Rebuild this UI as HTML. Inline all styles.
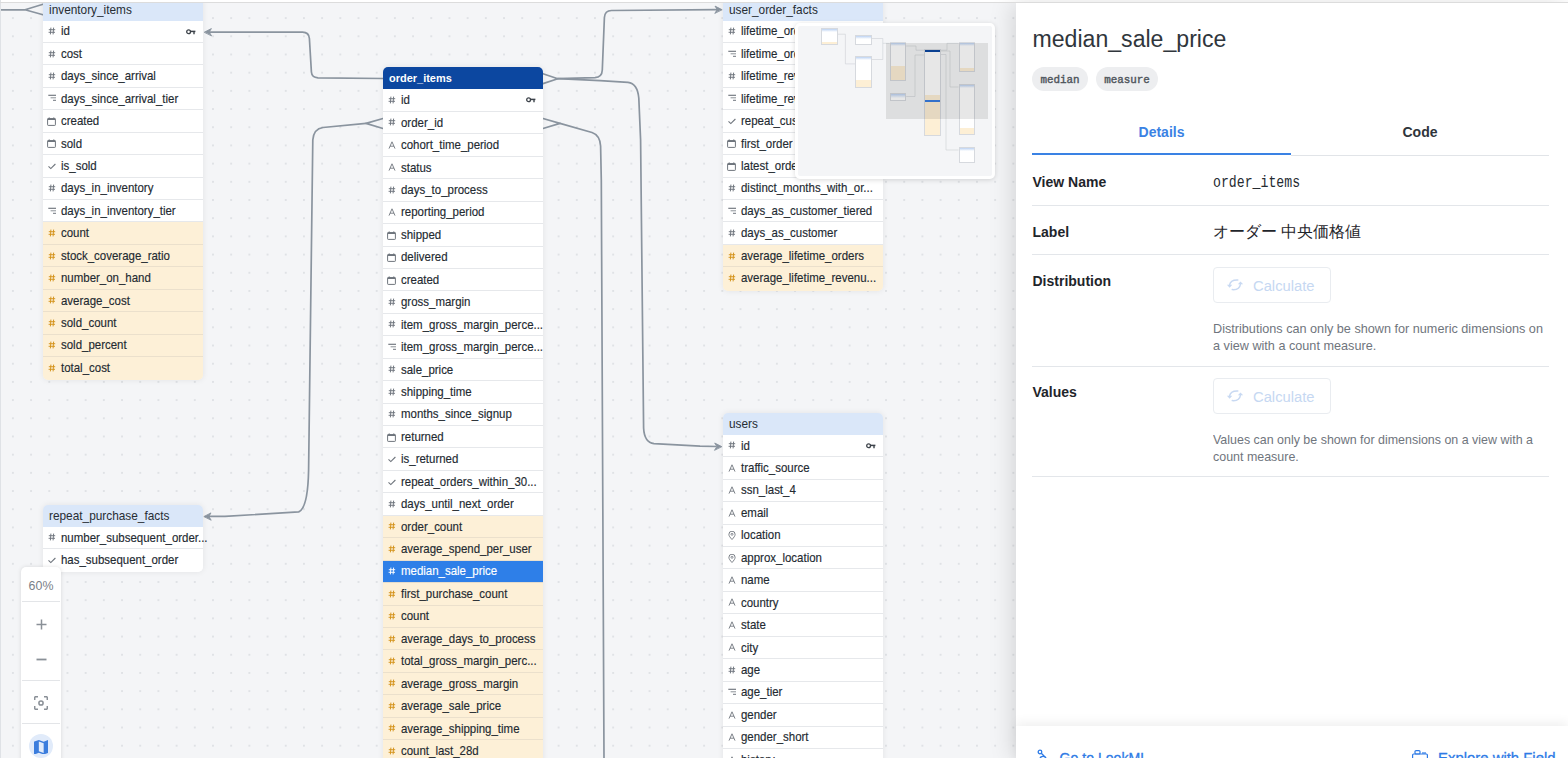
<!DOCTYPE html>
<html><head><meta charset="utf-8">
<style>
html,body{margin:0;padding:0;}
body{width:1568px;height:758px;overflow:hidden;position:relative;background:#fff;font-family:"Liberation Sans",sans-serif;}
#topline{position:absolute;left:0;top:2px;width:1568px;height:1px;background:#dcdcdc;z-index:50;}
#canvas{position:absolute;left:0;top:3px;width:1016px;height:755px;overflow:hidden;background-color:#f4f5f7;
 }
#canvas-inner{position:absolute;left:0;top:-3px;width:1016px;height:758px;}
#leftline{position:absolute;left:0;top:0;width:1px;height:758px;background:#dfe2e6;z-index:5}
.edges{position:absolute;left:0;top:0;}
.tbl{position:absolute;background:transparent;border-radius:5px;box-shadow:0 0 6px rgba(0,0,0,0.08);}
.hdr{position:absolute;left:0;top:0;right:0;background:#dae7f9;color:#272d34;font-size:12.4px;border-radius:5px 5px 0 0;}
.hdr span{position:absolute;left:5.8px;top:4.4px;line-height:14px;white-space:nowrap;transform:scaleX(0.955);transform-origin:0 50%;}
.hdr.sel{background:#0c47a0;color:#fff;font-weight:bold;}
.hdr.sel span{font-size:11.8px;transform:scaleX(0.93);top:3.5px;}
.row{position:absolute;left:0;right:0;box-sizing:border-box;border-bottom:1px solid #e6e8eb;font-size:12.4px;color:#232a31;background:#fff;-webkit-text-stroke:0.15px currentColor;}
.row.last{border-radius:0 0 5px 5px;border-bottom:none !important;}
.row.meas{background:#fdf0d7;border-bottom-color:#ebe0cc;}
.row.selrow{background:#2e7fe8;color:#fff;border-bottom-color:#e4dccd;}
.row span{position:absolute;left:17.6px;top:3.8px;line-height:14px;white-space:nowrap;transform:scaleX(0.925);transform-origin:0 50%;}
.ic{position:absolute;left:4.4px;top:6.6px;width:9px;height:9px;display:block;}
.ic svg{display:block;}
.key{position:absolute;right:7.5px;top:8.0px;display:block;}
.key svg{display:block}
#minimap{position:absolute;left:795px;top:23px;width:200px;height:155.6px;box-sizing:border-box;border:3px solid #fff;border-radius:5px;background:#f4f5f7;box-shadow:0 1px 5px rgba(0,0,0,0.15);overflow:hidden;z-index:20}
#zoomctl{position:absolute;left:21px;top:567px;width:40px;height:200px;background:#fff;border-radius:5px;box-shadow:0 0 4px rgba(0,0,0,0.12);z-index:20}
#panel{position:absolute;left:1016px;top:3px;width:552px;height:755px;background:#fff;box-shadow:-4px 0 22px rgba(0,0,0,0.13);z-index:30;}

#mm-inner{position:absolute;left:0;top:0;right:0;bottom:0;overflow:hidden;}
.mmt{position:absolute;background:#fff;box-sizing:border-box;border:0.6px solid #d6d9de;overflow:hidden;}
#mm-view{position:absolute;left:87.60000000000002px;top:16.9px;width:102.6px;height:75.9px;background:rgba(0,0,0,0.095);}
.zc-pct{position:absolute;left:0;width:40px;top:12px;text-align:center;font-size:12.4px;line-height:14px;color:#7a8088;}
.zc-div{position:absolute;left:1px;width:38px;height:1px;background:#e3e5e8;}
.p-title{position:absolute;left:16.5px;top:22px;font-size:23.1px;line-height:28px;color:#30363c;white-space:nowrap;}
.pill{position:absolute;top:64px;height:24px;box-sizing:border-box;padding-top:1.4px;border-radius:12px;background:#edeef0;font-family:"Liberation Mono",monospace;font-size:10.9px;line-height:24px;text-align:center;color:#4f555c;-webkit-text-stroke:0.4px #4f555c;}
.tab{position:absolute;top:119px;height:20px;text-align:center;font-size:14px;font-weight:bold;line-height:20px;}
.lbl{position:absolute;left:16.5px;font-size:14px;font-weight:bold;line-height:18px;color:#1f252b;white-space:nowrap;}
.mono{position:absolute;left:197px;font-family:"Liberation Mono",monospace;font-size:16.4px;line-height:20px;color:#262b31;transform:scaleX(0.805);transform-origin:0 0;white-space:nowrap;}
.jp{position:absolute;left:197px;font-size:15.5px;line-height:20px;color:#1f252b;white-space:nowrap;}
.sep{position:absolute;left:16px;width:517px;height:1px;background:#e3e6ea;}
.btn{position:absolute;left:197px;width:117.5px;height:35.4px;box-sizing:border-box;border:1px solid #e9ecf0;border-radius:4px;}
.btn span{position:absolute;left:39px;top:9px;font-size:14.75px;line-height:18px;color:#c6d8f2;white-space:nowrap;}
.desc{position:absolute;left:197px;font-size:12.66px;line-height:17.2px;color:#6f757d;white-space:nowrap;}
#footer{position:absolute;left:0;top:723px;width:552px;height:40px;background:#fff;box-shadow:0 -4px 10px rgba(0,0,0,0.06);}
.flink{position:absolute;top:22.5px;font-size:14.3px;line-height:18px;color:#2e7be6;white-space:nowrap;-webkit-text-stroke:0.3px #2e7be6;}
</style></head><body>
<div id="topline"></div>
<div id="canvas"><svg style="position:absolute;left:0;top:0" width="1016" height="755"><defs><pattern id="dots" x="12.9" y="15.1" width="18.19" height="18.19" patternUnits="userSpaceOnUse"><circle cx="0" cy="0" r="0.85" fill="#d5d8dd"/><circle cx="18.19" cy="0" r="0.85" fill="#d5d8dd"/><circle cx="0" cy="18.19" r="0.85" fill="#d5d8dd"/><circle cx="18.19" cy="18.19" r="0.85" fill="#d5d8dd"/></pattern></defs><rect width="1016" height="755" fill="url(#dots)"/></svg><div id="canvas-inner">

<svg class="edges" width="1016" height="758" viewBox="0 0 1016 758">
<g fill="none" stroke="#8a949f" stroke-width="1.7" stroke-linecap="round" stroke-linejoin="round">
<path d="M0 9.8 L25 9.8 M43 4.3 L25 9.8 L43 14.8"/>
<path d="M383 78.5 L318 77.8 Q311.8 77.5 311.4 72 L309.4 38.5 Q309 32.2 302.5 32.1 L208 32.1"/>
<path d="M204.6 32.1 L211.4 28.6 L209.2 32.1 L211.4 35.6 Z" fill="#8a949f" stroke="#8a949f" stroke-width="0.9" stroke-linejoin="miter"/>
<path d="M543 73.7 L557.8 78.7 L543 83.6"/>
<path d="M557.8 78.7 L595 77.6 Q602 77.2 602.3 70 L604.4 17.5 Q604.8 10.6 611.5 10.5 L717 9.6"/>
<path d="M721.8 9.6 L715.0 6.1 L717.1999999999999 9.6 L715.0 13.1 Z" fill="#8a949f" stroke="#8a949f" stroke-width="0.9" stroke-linejoin="miter"/>
<path d="M557.8 78.7 L600 80.6 L628 82.3 Q637.5 83.5 638.8 98 L640.6 140 L643.6 428 Q644.3 442.5 654 443.6 L700 446.2 L716 446.5"/>
<path d="M721.5 446.5 L714.7 443.0 L716.9 446.5 L714.7 450.0 Z" fill="#8a949f" stroke="#8a949f" stroke-width="0.9" stroke-linejoin="miter"/>
<path d="M543 118.5 L560 123.4 L543 128.5"/>
<path d="M560 123.4 L592 132.5 Q600 135.3 600.6 146 L601.3 180 L604 758"/>
<path d="M383 118.5 L366 123.4 L383 128.5"/>
<path d="M366 123.4 L323 127.5 Q313.6 128.8 312.8 140 L308.6 470 Q307.9 508 298.7 511.9 L225 516.4 L208 516.4"/>
<path d="M204.2 516.4 L211.0 512.9 L208.79999999999998 516.4 L211.0 519.9 Z" fill="#8a949f" stroke="#8a949f" stroke-width="0.9" stroke-linejoin="miter"/>
</g>
</svg>

<div class="tbl" style="left:43.2px;top:-1.6px;width:160px;height:381.94px">
<div class="hdr" style="height:22.1px"><span>inventory_items</span></div>
<div class="row" style="top:22.10px;height:22.44px"><i class="ic ic-num"><svg width="8" height="8" viewBox="0 0 8 8"><path d="M2.9 0.6 L2.4 7.4 M5.6 0.6 L5.1 7.4 M0.8 2.7 H7.2 M0.6 5.3 H7.0" stroke="#6f757d" stroke-width="0.95" fill="none"/></svg></i><span>id</span><i class="key"><svg width="10" height="6" viewBox="0 0 10 6"><circle cx="2.6" cy="2.8" r="1.9" stroke="#3d434a" stroke-width="1.3" fill="none"/><path d="M4.4 2.4 H9.4" stroke="#3d434a" stroke-width="1.5"/><path d="M8 2.4 V5.2" stroke="#3d434a" stroke-width="1.4"/></svg></i></div>
<div class="row" style="top:44.54px;height:22.44px"><i class="ic ic-num"><svg width="8" height="8" viewBox="0 0 8 8"><path d="M2.9 0.6 L2.4 7.4 M5.6 0.6 L5.1 7.4 M0.8 2.7 H7.2 M0.6 5.3 H7.0" stroke="#6f757d" stroke-width="0.95" fill="none"/></svg></i><span>cost</span></div>
<div class="row" style="top:66.98px;height:22.44px"><i class="ic ic-num"><svg width="8" height="8" viewBox="0 0 8 8"><path d="M2.9 0.6 L2.4 7.4 M5.6 0.6 L5.1 7.4 M0.8 2.7 H7.2 M0.6 5.3 H7.0" stroke="#6f757d" stroke-width="0.95" fill="none"/></svg></i><span>days_since_arrival</span></div>
<div class="row" style="top:89.42px;height:22.44px"><i class="ic ic-tier"><svg width="9" height="8" viewBox="0 0 9 8"><path d="M0.3 1.3 H8.0" stroke="#6f757d" stroke-width="1.15" fill="none"/><path d="M2.6 3.8 H8.0" stroke="#6f757d" stroke-width="1" fill="none" opacity="0.8"/><path d="M5.0 6.3 H8.0" stroke="#6f757d" stroke-width="1" fill="none"/></svg></i><span>days_since_arrival_tier</span></div>
<div class="row" style="top:111.86px;height:22.44px"><i class="ic ic-date"><svg width="9" height="9" viewBox="0 0 9 9" style="margin-left:-0.7px;margin-top:0.2px"><rect x="0.6" y="1.6" width="7.8" height="6.8" rx="0.6" stroke="#6f757d" stroke-width="1" fill="none"/><path d="M0.6 2.2 H8.4" stroke="#6f757d" stroke-width="1.6"/><path d="M2.2 0.4 V2 M6.8 0.4 V2" stroke="#6f757d" stroke-width="1"/></svg></i><span>created</span></div>
<div class="row" style="top:134.30px;height:22.44px"><i class="ic ic-date"><svg width="9" height="9" viewBox="0 0 9 9" style="margin-left:-0.7px;margin-top:0.2px"><rect x="0.6" y="1.6" width="7.8" height="6.8" rx="0.6" stroke="#6f757d" stroke-width="1" fill="none"/><path d="M0.6 2.2 H8.4" stroke="#6f757d" stroke-width="1.6"/><path d="M2.2 0.4 V2 M6.8 0.4 V2" stroke="#6f757d" stroke-width="1"/></svg></i><span>sold</span></div>
<div class="row" style="top:156.74px;height:22.44px"><i class="ic ic-yes"><svg width="8" height="8" viewBox="0 0 8 8"><path d="M0.5 4.4 L2.8 6.6 L7.4 2.0" stroke="#6f757d" stroke-width="1.1" fill="none"/></svg></i><span>is_sold</span></div>
<div class="row" style="top:179.18px;height:22.44px"><i class="ic ic-num"><svg width="8" height="8" viewBox="0 0 8 8"><path d="M2.9 0.6 L2.4 7.4 M5.6 0.6 L5.1 7.4 M0.8 2.7 H7.2 M0.6 5.3 H7.0" stroke="#6f757d" stroke-width="0.95" fill="none"/></svg></i><span>days_in_inventory</span></div>
<div class="row" style="top:201.62px;height:22.44px"><i class="ic ic-tier"><svg width="9" height="8" viewBox="0 0 9 8"><path d="M0.3 1.3 H8.0" stroke="#6f757d" stroke-width="1.15" fill="none"/><path d="M2.6 3.8 H8.0" stroke="#6f757d" stroke-width="1" fill="none" opacity="0.8"/><path d="M5.0 6.3 H8.0" stroke="#6f757d" stroke-width="1" fill="none"/></svg></i><span>days_in_inventory_tier</span></div>
<div class="row meas" style="top:224.06px;height:22.44px"><i class="ic ic-num"><svg width="8" height="8" viewBox="0 0 8 8"><path d="M2.9 0.6 L2.4 7.4 M5.6 0.6 L5.1 7.4 M0.8 2.7 H7.2 M0.6 5.3 H7.0" stroke="#d4921a" stroke-width="0.95" fill="none"/></svg></i><span>count</span></div>
<div class="row meas" style="top:246.50px;height:22.44px"><i class="ic ic-num"><svg width="8" height="8" viewBox="0 0 8 8"><path d="M2.9 0.6 L2.4 7.4 M5.6 0.6 L5.1 7.4 M0.8 2.7 H7.2 M0.6 5.3 H7.0" stroke="#d4921a" stroke-width="0.95" fill="none"/></svg></i><span>stock_coverage_ratio</span></div>
<div class="row meas" style="top:268.94px;height:22.44px"><i class="ic ic-num"><svg width="8" height="8" viewBox="0 0 8 8"><path d="M2.9 0.6 L2.4 7.4 M5.6 0.6 L5.1 7.4 M0.8 2.7 H7.2 M0.6 5.3 H7.0" stroke="#d4921a" stroke-width="0.95" fill="none"/></svg></i><span>number_on_hand</span></div>
<div class="row meas" style="top:291.38px;height:22.44px"><i class="ic ic-num"><svg width="8" height="8" viewBox="0 0 8 8"><path d="M2.9 0.6 L2.4 7.4 M5.6 0.6 L5.1 7.4 M0.8 2.7 H7.2 M0.6 5.3 H7.0" stroke="#d4921a" stroke-width="0.95" fill="none"/></svg></i><span>average_cost</span></div>
<div class="row meas" style="top:313.82px;height:22.44px"><i class="ic ic-num"><svg width="8" height="8" viewBox="0 0 8 8"><path d="M2.9 0.6 L2.4 7.4 M5.6 0.6 L5.1 7.4 M0.8 2.7 H7.2 M0.6 5.3 H7.0" stroke="#d4921a" stroke-width="0.95" fill="none"/></svg></i><span>sold_count</span></div>
<div class="row meas" style="top:336.26px;height:22.44px"><i class="ic ic-num"><svg width="8" height="8" viewBox="0 0 8 8"><path d="M2.9 0.6 L2.4 7.4 M5.6 0.6 L5.1 7.4 M0.8 2.7 H7.2 M0.6 5.3 H7.0" stroke="#d4921a" stroke-width="0.95" fill="none"/></svg></i><span>sold_percent</span></div>
<div class="row meas last" style="top:358.70px;height:23.24px"><i class="ic ic-num"><svg width="8" height="8" viewBox="0 0 8 8"><path d="M2.9 0.6 L2.4 7.4 M5.6 0.6 L5.1 7.4 M0.8 2.7 H7.2 M0.6 5.3 H7.0" stroke="#d4921a" stroke-width="0.95" fill="none"/></svg></i><span>total_cost</span></div>
</div>
<div class="tbl" style="left:723.2px;top:-1.6px;width:160px;height:292.18px">
<div class="hdr" style="height:22.1px"><span>user_order_facts</span></div>
<div class="row" style="top:22.10px;height:22.44px"><i class="ic ic-num"><svg width="8" height="8" viewBox="0 0 8 8"><path d="M2.9 0.6 L2.4 7.4 M5.6 0.6 L5.1 7.4 M0.8 2.7 H7.2 M0.6 5.3 H7.0" stroke="#6f757d" stroke-width="0.95" fill="none"/></svg></i><span>lifetime_orders</span></div>
<div class="row" style="top:44.54px;height:22.44px"><i class="ic ic-tier"><svg width="9" height="8" viewBox="0 0 9 8"><path d="M0.3 1.3 H8.0" stroke="#6f757d" stroke-width="1.15" fill="none"/><path d="M2.6 3.8 H8.0" stroke="#6f757d" stroke-width="1" fill="none" opacity="0.8"/><path d="M5.0 6.3 H8.0" stroke="#6f757d" stroke-width="1" fill="none"/></svg></i><span>lifetime_orders_tier</span></div>
<div class="row" style="top:66.98px;height:22.44px"><i class="ic ic-num"><svg width="8" height="8" viewBox="0 0 8 8"><path d="M2.9 0.6 L2.4 7.4 M5.6 0.6 L5.1 7.4 M0.8 2.7 H7.2 M0.6 5.3 H7.0" stroke="#6f757d" stroke-width="0.95" fill="none"/></svg></i><span>lifetime_revenue</span></div>
<div class="row" style="top:89.42px;height:22.44px"><i class="ic ic-tier"><svg width="9" height="8" viewBox="0 0 9 8"><path d="M0.3 1.3 H8.0" stroke="#6f757d" stroke-width="1.15" fill="none"/><path d="M2.6 3.8 H8.0" stroke="#6f757d" stroke-width="1" fill="none" opacity="0.8"/><path d="M5.0 6.3 H8.0" stroke="#6f757d" stroke-width="1" fill="none"/></svg></i><span>lifetime_revenue_tier</span></div>
<div class="row" style="top:111.86px;height:22.44px"><i class="ic ic-yes"><svg width="8" height="8" viewBox="0 0 8 8"><path d="M0.5 4.4 L2.8 6.6 L7.4 2.0" stroke="#6f757d" stroke-width="1.1" fill="none"/></svg></i><span>repeat_customer</span></div>
<div class="row" style="top:134.30px;height:22.44px"><i class="ic ic-date"><svg width="9" height="9" viewBox="0 0 9 9" style="margin-left:-0.7px;margin-top:0.2px"><rect x="0.6" y="1.6" width="7.8" height="6.8" rx="0.6" stroke="#6f757d" stroke-width="1" fill="none"/><path d="M0.6 2.2 H8.4" stroke="#6f757d" stroke-width="1.6"/><path d="M2.2 0.4 V2 M6.8 0.4 V2" stroke="#6f757d" stroke-width="1"/></svg></i><span>first_order</span></div>
<div class="row" style="top:156.74px;height:22.44px"><i class="ic ic-date"><svg width="9" height="9" viewBox="0 0 9 9" style="margin-left:-0.7px;margin-top:0.2px"><rect x="0.6" y="1.6" width="7.8" height="6.8" rx="0.6" stroke="#6f757d" stroke-width="1" fill="none"/><path d="M0.6 2.2 H8.4" stroke="#6f757d" stroke-width="1.6"/><path d="M2.2 0.4 V2 M6.8 0.4 V2" stroke="#6f757d" stroke-width="1"/></svg></i><span>latest_order</span></div>
<div class="row" style="top:179.18px;height:22.44px"><i class="ic ic-num"><svg width="8" height="8" viewBox="0 0 8 8"><path d="M2.9 0.6 L2.4 7.4 M5.6 0.6 L5.1 7.4 M0.8 2.7 H7.2 M0.6 5.3 H7.0" stroke="#6f757d" stroke-width="0.95" fill="none"/></svg></i><span>distinct_months_with_or...</span></div>
<div class="row" style="top:201.62px;height:22.44px"><i class="ic ic-tier"><svg width="9" height="8" viewBox="0 0 9 8"><path d="M0.3 1.3 H8.0" stroke="#6f757d" stroke-width="1.15" fill="none"/><path d="M2.6 3.8 H8.0" stroke="#6f757d" stroke-width="1" fill="none" opacity="0.8"/><path d="M5.0 6.3 H8.0" stroke="#6f757d" stroke-width="1" fill="none"/></svg></i><span>days_as_customer_tiered</span></div>
<div class="row" style="top:224.06px;height:22.44px"><i class="ic ic-num"><svg width="8" height="8" viewBox="0 0 8 8"><path d="M2.9 0.6 L2.4 7.4 M5.6 0.6 L5.1 7.4 M0.8 2.7 H7.2 M0.6 5.3 H7.0" stroke="#6f757d" stroke-width="0.95" fill="none"/></svg></i><span>days_as_customer</span></div>
<div class="row meas" style="top:246.50px;height:22.44px"><i class="ic ic-num"><svg width="8" height="8" viewBox="0 0 8 8"><path d="M2.9 0.6 L2.4 7.4 M5.6 0.6 L5.1 7.4 M0.8 2.7 H7.2 M0.6 5.3 H7.0" stroke="#d4921a" stroke-width="0.95" fill="none"/></svg></i><span>average_lifetime_orders</span></div>
<div class="row meas last" style="top:268.94px;height:23.24px"><i class="ic ic-num"><svg width="8" height="8" viewBox="0 0 8 8"><path d="M2.9 0.6 L2.4 7.4 M5.6 0.6 L5.1 7.4 M0.8 2.7 H7.2 M0.6 5.3 H7.0" stroke="#d4921a" stroke-width="0.95" fill="none"/></svg></i><span>average_lifetime_revenu...</span></div>
</div>
<div class="tbl" style="left:383.2px;top:67.35px;width:160px;height:718.54px">
<div class="hdr sel" style="height:22.1px"><span>order_items</span></div>
<div class="row" style="top:22.10px;height:22.44px"><i class="ic ic-num"><svg width="8" height="8" viewBox="0 0 8 8"><path d="M2.9 0.6 L2.4 7.4 M5.6 0.6 L5.1 7.4 M0.8 2.7 H7.2 M0.6 5.3 H7.0" stroke="#6f757d" stroke-width="0.95" fill="none"/></svg></i><span>id</span><i class="key"><svg width="10" height="6" viewBox="0 0 10 6"><circle cx="2.6" cy="2.8" r="1.9" stroke="#3d434a" stroke-width="1.3" fill="none"/><path d="M4.4 2.4 H9.4" stroke="#3d434a" stroke-width="1.5"/><path d="M8 2.4 V5.2" stroke="#3d434a" stroke-width="1.4"/></svg></i></div>
<div class="row" style="top:44.54px;height:22.44px"><i class="ic ic-num"><svg width="8" height="8" viewBox="0 0 8 8"><path d="M2.9 0.6 L2.4 7.4 M5.6 0.6 L5.1 7.4 M0.8 2.7 H7.2 M0.6 5.3 H7.0" stroke="#6f757d" stroke-width="0.95" fill="none"/></svg></i><span>order_id</span></div>
<div class="row" style="top:66.98px;height:22.44px"><i class="ic ic-str"><svg width="8" height="8" viewBox="0 0 8 8"><path d="M1 7.6 L4 0.8 L7 7.6 M2.1 5.2 H5.9" stroke="#6f757d" stroke-width="0.9" fill="none"/></svg></i><span>cohort_time_period</span></div>
<div class="row" style="top:89.42px;height:22.44px"><i class="ic ic-str"><svg width="8" height="8" viewBox="0 0 8 8"><path d="M1 7.6 L4 0.8 L7 7.6 M2.1 5.2 H5.9" stroke="#6f757d" stroke-width="0.9" fill="none"/></svg></i><span>status</span></div>
<div class="row" style="top:111.86px;height:22.44px"><i class="ic ic-num"><svg width="8" height="8" viewBox="0 0 8 8"><path d="M2.9 0.6 L2.4 7.4 M5.6 0.6 L5.1 7.4 M0.8 2.7 H7.2 M0.6 5.3 H7.0" stroke="#6f757d" stroke-width="0.95" fill="none"/></svg></i><span>days_to_process</span></div>
<div class="row" style="top:134.30px;height:22.44px"><i class="ic ic-str"><svg width="8" height="8" viewBox="0 0 8 8"><path d="M1 7.6 L4 0.8 L7 7.6 M2.1 5.2 H5.9" stroke="#6f757d" stroke-width="0.9" fill="none"/></svg></i><span>reporting_period</span></div>
<div class="row" style="top:156.74px;height:22.44px"><i class="ic ic-date"><svg width="9" height="9" viewBox="0 0 9 9" style="margin-left:-0.7px;margin-top:0.2px"><rect x="0.6" y="1.6" width="7.8" height="6.8" rx="0.6" stroke="#6f757d" stroke-width="1" fill="none"/><path d="M0.6 2.2 H8.4" stroke="#6f757d" stroke-width="1.6"/><path d="M2.2 0.4 V2 M6.8 0.4 V2" stroke="#6f757d" stroke-width="1"/></svg></i><span>shipped</span></div>
<div class="row" style="top:179.18px;height:22.44px"><i class="ic ic-date"><svg width="9" height="9" viewBox="0 0 9 9" style="margin-left:-0.7px;margin-top:0.2px"><rect x="0.6" y="1.6" width="7.8" height="6.8" rx="0.6" stroke="#6f757d" stroke-width="1" fill="none"/><path d="M0.6 2.2 H8.4" stroke="#6f757d" stroke-width="1.6"/><path d="M2.2 0.4 V2 M6.8 0.4 V2" stroke="#6f757d" stroke-width="1"/></svg></i><span>delivered</span></div>
<div class="row" style="top:201.62px;height:22.44px"><i class="ic ic-date"><svg width="9" height="9" viewBox="0 0 9 9" style="margin-left:-0.7px;margin-top:0.2px"><rect x="0.6" y="1.6" width="7.8" height="6.8" rx="0.6" stroke="#6f757d" stroke-width="1" fill="none"/><path d="M0.6 2.2 H8.4" stroke="#6f757d" stroke-width="1.6"/><path d="M2.2 0.4 V2 M6.8 0.4 V2" stroke="#6f757d" stroke-width="1"/></svg></i><span>created</span></div>
<div class="row" style="top:224.06px;height:22.44px"><i class="ic ic-num"><svg width="8" height="8" viewBox="0 0 8 8"><path d="M2.9 0.6 L2.4 7.4 M5.6 0.6 L5.1 7.4 M0.8 2.7 H7.2 M0.6 5.3 H7.0" stroke="#6f757d" stroke-width="0.95" fill="none"/></svg></i><span>gross_margin</span></div>
<div class="row" style="top:246.50px;height:22.44px"><i class="ic ic-num"><svg width="8" height="8" viewBox="0 0 8 8"><path d="M2.9 0.6 L2.4 7.4 M5.6 0.6 L5.1 7.4 M0.8 2.7 H7.2 M0.6 5.3 H7.0" stroke="#6f757d" stroke-width="0.95" fill="none"/></svg></i><span>item_gross_margin_perce...</span></div>
<div class="row" style="top:268.94px;height:22.44px"><i class="ic ic-tier"><svg width="9" height="8" viewBox="0 0 9 8"><path d="M0.3 1.3 H8.0" stroke="#6f757d" stroke-width="1.15" fill="none"/><path d="M2.6 3.8 H8.0" stroke="#6f757d" stroke-width="1" fill="none" opacity="0.8"/><path d="M5.0 6.3 H8.0" stroke="#6f757d" stroke-width="1" fill="none"/></svg></i><span>item_gross_margin_perce...</span></div>
<div class="row" style="top:291.38px;height:22.44px"><i class="ic ic-num"><svg width="8" height="8" viewBox="0 0 8 8"><path d="M2.9 0.6 L2.4 7.4 M5.6 0.6 L5.1 7.4 M0.8 2.7 H7.2 M0.6 5.3 H7.0" stroke="#6f757d" stroke-width="0.95" fill="none"/></svg></i><span>sale_price</span></div>
<div class="row" style="top:313.82px;height:22.44px"><i class="ic ic-num"><svg width="8" height="8" viewBox="0 0 8 8"><path d="M2.9 0.6 L2.4 7.4 M5.6 0.6 L5.1 7.4 M0.8 2.7 H7.2 M0.6 5.3 H7.0" stroke="#6f757d" stroke-width="0.95" fill="none"/></svg></i><span>shipping_time</span></div>
<div class="row" style="top:336.26px;height:22.44px"><i class="ic ic-num"><svg width="8" height="8" viewBox="0 0 8 8"><path d="M2.9 0.6 L2.4 7.4 M5.6 0.6 L5.1 7.4 M0.8 2.7 H7.2 M0.6 5.3 H7.0" stroke="#6f757d" stroke-width="0.95" fill="none"/></svg></i><span>months_since_signup</span></div>
<div class="row" style="top:358.70px;height:22.44px"><i class="ic ic-date"><svg width="9" height="9" viewBox="0 0 9 9" style="margin-left:-0.7px;margin-top:0.2px"><rect x="0.6" y="1.6" width="7.8" height="6.8" rx="0.6" stroke="#6f757d" stroke-width="1" fill="none"/><path d="M0.6 2.2 H8.4" stroke="#6f757d" stroke-width="1.6"/><path d="M2.2 0.4 V2 M6.8 0.4 V2" stroke="#6f757d" stroke-width="1"/></svg></i><span>returned</span></div>
<div class="row" style="top:381.14px;height:22.44px"><i class="ic ic-yes"><svg width="8" height="8" viewBox="0 0 8 8"><path d="M0.5 4.4 L2.8 6.6 L7.4 2.0" stroke="#6f757d" stroke-width="1.1" fill="none"/></svg></i><span>is_returned</span></div>
<div class="row" style="top:403.58px;height:22.44px"><i class="ic ic-yes"><svg width="8" height="8" viewBox="0 0 8 8"><path d="M0.5 4.4 L2.8 6.6 L7.4 2.0" stroke="#6f757d" stroke-width="1.1" fill="none"/></svg></i><span>repeat_orders_within_30...</span></div>
<div class="row" style="top:426.02px;height:22.44px"><i class="ic ic-num"><svg width="8" height="8" viewBox="0 0 8 8"><path d="M2.9 0.6 L2.4 7.4 M5.6 0.6 L5.1 7.4 M0.8 2.7 H7.2 M0.6 5.3 H7.0" stroke="#6f757d" stroke-width="0.95" fill="none"/></svg></i><span>days_until_next_order</span></div>
<div class="row meas" style="top:448.46px;height:22.44px"><i class="ic ic-num"><svg width="8" height="8" viewBox="0 0 8 8"><path d="M2.9 0.6 L2.4 7.4 M5.6 0.6 L5.1 7.4 M0.8 2.7 H7.2 M0.6 5.3 H7.0" stroke="#d4921a" stroke-width="0.95" fill="none"/></svg></i><span>order_count</span></div>
<div class="row meas" style="top:470.90px;height:22.44px"><i class="ic ic-num"><svg width="8" height="8" viewBox="0 0 8 8"><path d="M2.9 0.6 L2.4 7.4 M5.6 0.6 L5.1 7.4 M0.8 2.7 H7.2 M0.6 5.3 H7.0" stroke="#d4921a" stroke-width="0.95" fill="none"/></svg></i><span>average_spend_per_user</span></div>
<div class="row selrow" style="top:493.34px;height:22.44px"><i class="ic ic-num"><svg width="8" height="8" viewBox="0 0 8 8"><path d="M2.9 0.6 L2.4 7.4 M5.6 0.6 L5.1 7.4 M0.8 2.7 H7.2 M0.6 5.3 H7.0" stroke="#ffffff" stroke-width="0.95" fill="none"/></svg></i><span>median_sale_price</span></div>
<div class="row meas" style="top:515.78px;height:22.44px"><i class="ic ic-num"><svg width="8" height="8" viewBox="0 0 8 8"><path d="M2.9 0.6 L2.4 7.4 M5.6 0.6 L5.1 7.4 M0.8 2.7 H7.2 M0.6 5.3 H7.0" stroke="#d4921a" stroke-width="0.95" fill="none"/></svg></i><span>first_purchase_count</span></div>
<div class="row meas" style="top:538.22px;height:22.44px"><i class="ic ic-num"><svg width="8" height="8" viewBox="0 0 8 8"><path d="M2.9 0.6 L2.4 7.4 M5.6 0.6 L5.1 7.4 M0.8 2.7 H7.2 M0.6 5.3 H7.0" stroke="#d4921a" stroke-width="0.95" fill="none"/></svg></i><span>count</span></div>
<div class="row meas" style="top:560.66px;height:22.44px"><i class="ic ic-num"><svg width="8" height="8" viewBox="0 0 8 8"><path d="M2.9 0.6 L2.4 7.4 M5.6 0.6 L5.1 7.4 M0.8 2.7 H7.2 M0.6 5.3 H7.0" stroke="#d4921a" stroke-width="0.95" fill="none"/></svg></i><span>average_days_to_process</span></div>
<div class="row meas" style="top:583.10px;height:22.44px"><i class="ic ic-num"><svg width="8" height="8" viewBox="0 0 8 8"><path d="M2.9 0.6 L2.4 7.4 M5.6 0.6 L5.1 7.4 M0.8 2.7 H7.2 M0.6 5.3 H7.0" stroke="#d4921a" stroke-width="0.95" fill="none"/></svg></i><span>total_gross_margin_perc...</span></div>
<div class="row meas" style="top:605.54px;height:22.44px"><i class="ic ic-num"><svg width="8" height="8" viewBox="0 0 8 8"><path d="M2.9 0.6 L2.4 7.4 M5.6 0.6 L5.1 7.4 M0.8 2.7 H7.2 M0.6 5.3 H7.0" stroke="#d4921a" stroke-width="0.95" fill="none"/></svg></i><span>average_gross_margin</span></div>
<div class="row meas" style="top:627.98px;height:22.44px"><i class="ic ic-num"><svg width="8" height="8" viewBox="0 0 8 8"><path d="M2.9 0.6 L2.4 7.4 M5.6 0.6 L5.1 7.4 M0.8 2.7 H7.2 M0.6 5.3 H7.0" stroke="#d4921a" stroke-width="0.95" fill="none"/></svg></i><span>average_sale_price</span></div>
<div class="row meas" style="top:650.42px;height:22.44px"><i class="ic ic-num"><svg width="8" height="8" viewBox="0 0 8 8"><path d="M2.9 0.6 L2.4 7.4 M5.6 0.6 L5.1 7.4 M0.8 2.7 H7.2 M0.6 5.3 H7.0" stroke="#d4921a" stroke-width="0.95" fill="none"/></svg></i><span>average_shipping_time</span></div>
<div class="row meas" style="top:672.86px;height:22.44px"><i class="ic ic-num"><svg width="8" height="8" viewBox="0 0 8 8"><path d="M2.9 0.6 L2.4 7.4 M5.6 0.6 L5.1 7.4 M0.8 2.7 H7.2 M0.6 5.3 H7.0" stroke="#d4921a" stroke-width="0.95" fill="none"/></svg></i><span>count_last_28d</span></div>
<div class="row meas last" style="top:695.30px;height:23.24px"><i class="ic ic-num"><svg width="8" height="8" viewBox="0 0 8 8"><path d="M2.9 0.6 L2.4 7.4 M5.6 0.6 L5.1 7.4 M0.8 2.7 H7.2 M0.6 5.3 H7.0" stroke="#d4921a" stroke-width="0.95" fill="none"/></svg></i><span>count_last_7d</span></div>
</div>
<div class="tbl" style="left:723.2px;top:412.7px;width:160px;height:381.94px">
<div class="hdr" style="height:22.1px"><span>users</span></div>
<div class="row" style="top:22.10px;height:22.44px"><i class="ic ic-num"><svg width="8" height="8" viewBox="0 0 8 8"><path d="M2.9 0.6 L2.4 7.4 M5.6 0.6 L5.1 7.4 M0.8 2.7 H7.2 M0.6 5.3 H7.0" stroke="#6f757d" stroke-width="0.95" fill="none"/></svg></i><span>id</span><i class="key"><svg width="10" height="6" viewBox="0 0 10 6"><circle cx="2.6" cy="2.8" r="1.9" stroke="#3d434a" stroke-width="1.3" fill="none"/><path d="M4.4 2.4 H9.4" stroke="#3d434a" stroke-width="1.5"/><path d="M8 2.4 V5.2" stroke="#3d434a" stroke-width="1.4"/></svg></i></div>
<div class="row" style="top:44.54px;height:22.44px"><i class="ic ic-str"><svg width="8" height="8" viewBox="0 0 8 8"><path d="M1 7.6 L4 0.8 L7 7.6 M2.1 5.2 H5.9" stroke="#6f757d" stroke-width="0.9" fill="none"/></svg></i><span>traffic_source</span></div>
<div class="row" style="top:66.98px;height:22.44px"><i class="ic ic-str"><svg width="8" height="8" viewBox="0 0 8 8"><path d="M1 7.6 L4 0.8 L7 7.6 M2.1 5.2 H5.9" stroke="#6f757d" stroke-width="0.9" fill="none"/></svg></i><span>ssn_last_4</span></div>
<div class="row" style="top:89.42px;height:22.44px"><i class="ic ic-str"><svg width="8" height="8" viewBox="0 0 8 8"><path d="M1 7.6 L4 0.8 L7 7.6 M2.1 5.2 H5.9" stroke="#6f757d" stroke-width="0.9" fill="none"/></svg></i><span>email</span></div>
<div class="row" style="top:111.86px;height:22.44px"><i class="ic ic-loc"><svg width="8" height="9" viewBox="0 0 8 9"><path d="M4 8.5 C2.2 6.5 0.9 5 0.9 3.3 A3.1 3.1 0 0 1 7.1 3.3 C7.1 5 5.8 6.5 4 8.5 Z" stroke="#6f757d" stroke-width="0.9" fill="none"/><circle cx="4" cy="3.3" r="1" stroke="#6f757d" stroke-width="0.8" fill="none"/></svg></i><span>location</span></div>
<div class="row" style="top:134.30px;height:22.44px"><i class="ic ic-loc"><svg width="8" height="9" viewBox="0 0 8 9"><path d="M4 8.5 C2.2 6.5 0.9 5 0.9 3.3 A3.1 3.1 0 0 1 7.1 3.3 C7.1 5 5.8 6.5 4 8.5 Z" stroke="#6f757d" stroke-width="0.9" fill="none"/><circle cx="4" cy="3.3" r="1" stroke="#6f757d" stroke-width="0.8" fill="none"/></svg></i><span>approx_location</span></div>
<div class="row" style="top:156.74px;height:22.44px"><i class="ic ic-str"><svg width="8" height="8" viewBox="0 0 8 8"><path d="M1 7.6 L4 0.8 L7 7.6 M2.1 5.2 H5.9" stroke="#6f757d" stroke-width="0.9" fill="none"/></svg></i><span>name</span></div>
<div class="row" style="top:179.18px;height:22.44px"><i class="ic ic-str"><svg width="8" height="8" viewBox="0 0 8 8"><path d="M1 7.6 L4 0.8 L7 7.6 M2.1 5.2 H5.9" stroke="#6f757d" stroke-width="0.9" fill="none"/></svg></i><span>country</span></div>
<div class="row" style="top:201.62px;height:22.44px"><i class="ic ic-str"><svg width="8" height="8" viewBox="0 0 8 8"><path d="M1 7.6 L4 0.8 L7 7.6 M2.1 5.2 H5.9" stroke="#6f757d" stroke-width="0.9" fill="none"/></svg></i><span>state</span></div>
<div class="row" style="top:224.06px;height:22.44px"><i class="ic ic-str"><svg width="8" height="8" viewBox="0 0 8 8"><path d="M1 7.6 L4 0.8 L7 7.6 M2.1 5.2 H5.9" stroke="#6f757d" stroke-width="0.9" fill="none"/></svg></i><span>city</span></div>
<div class="row" style="top:246.50px;height:22.44px"><i class="ic ic-num"><svg width="8" height="8" viewBox="0 0 8 8"><path d="M2.9 0.6 L2.4 7.4 M5.6 0.6 L5.1 7.4 M0.8 2.7 H7.2 M0.6 5.3 H7.0" stroke="#6f757d" stroke-width="0.95" fill="none"/></svg></i><span>age</span></div>
<div class="row" style="top:268.94px;height:22.44px"><i class="ic ic-tier"><svg width="9" height="8" viewBox="0 0 9 8"><path d="M0.3 1.3 H8.0" stroke="#6f757d" stroke-width="1.15" fill="none"/><path d="M2.6 3.8 H8.0" stroke="#6f757d" stroke-width="1" fill="none" opacity="0.8"/><path d="M5.0 6.3 H8.0" stroke="#6f757d" stroke-width="1" fill="none"/></svg></i><span>age_tier</span></div>
<div class="row" style="top:291.38px;height:22.44px"><i class="ic ic-str"><svg width="8" height="8" viewBox="0 0 8 8"><path d="M1 7.6 L4 0.8 L7 7.6 M2.1 5.2 H5.9" stroke="#6f757d" stroke-width="0.9" fill="none"/></svg></i><span>gender</span></div>
<div class="row" style="top:313.82px;height:22.44px"><i class="ic ic-str"><svg width="8" height="8" viewBox="0 0 8 8"><path d="M1 7.6 L4 0.8 L7 7.6 M2.1 5.2 H5.9" stroke="#6f757d" stroke-width="0.9" fill="none"/></svg></i><span>gender_short</span></div>
<div class="row" style="top:336.26px;height:22.44px"><i class="ic ic-str"><svg width="8" height="8" viewBox="0 0 8 8"><path d="M1 7.6 L4 0.8 L7 7.6 M2.1 5.2 H5.9" stroke="#6f757d" stroke-width="0.9" fill="none"/></svg></i><span>history</span></div>
<div class="row last" style="top:358.70px;height:23.24px"><i class="ic ic-str"><svg width="8" height="8" viewBox="0 0 8 8"><path d="M1 7.6 L4 0.8 L7 7.6 M2.1 5.2 H5.9" stroke="#6f757d" stroke-width="0.9" fill="none"/></svg></i><span>zip</span></div>
</div>
<div class="tbl" style="left:43.2px;top:504.7px;width:160px;height:67.78px">
<div class="hdr" style="height:22.1px"><span>repeat_purchase_facts</span></div>
<div class="row" style="top:22.10px;height:22.44px"><i class="ic ic-num"><svg width="8" height="8" viewBox="0 0 8 8"><path d="M2.9 0.6 L2.4 7.4 M5.6 0.6 L5.1 7.4 M0.8 2.7 H7.2 M0.6 5.3 H7.0" stroke="#6f757d" stroke-width="0.95" fill="none"/></svg></i><span>number_subsequent_order...</span></div>
<div class="row last" style="top:44.54px;height:23.24px"><i class="ic ic-yes"><svg width="8" height="8" viewBox="0 0 8 8"><path d="M0.5 4.4 L2.8 6.6 L7.4 2.0" stroke="#6f757d" stroke-width="1.1" fill="none"/></svg></i><span>has_subsequent_order</span></div>
</div>
</div></div>
<div id="leftline"></div>
<div id="minimap"><div id="mm-inner"><svg style="position:absolute;left:0;top:0" width="194" height="150"><g fill="none" stroke="#cdd0d5" stroke-width="0.6">
<path d="M39.5 8.200000000000003 H47.39999999999998 V37.9 H57.200000000000045"/>
<path d="M73.79999999999995 12.5 H84.79999999999995 V33.5 H73.79999999999995"/>
<path d="M84.79999999999995 17.299999999999997 H91.60000000000002"/>
<path d="M108.20000000000005 20 H118 V24.200000000000003 H126.39999999999998"/>
<path d="M108.20000000000005 70.5 H117 V29 H126.39999999999998"/>
<path d="M142.70000000000005 24.200000000000003 H149 V17.299999999999997 H160.5"/>
<path d="M142.70000000000005 25 H152 V61 H160.5"/>
<path d="M142.70000000000005 28.5 H148 V124 H160.5"/>
</g></svg><div class="mmt" style="left:23.08px;top:2.02px;width:16.60px;height:16.79px"><div style="position:absolute;left:0;right:0;top:0;height:3.2px;background:linear-gradient(#bcd2f2,#fff)"></div><div style="position:absolute;left:0;right:0;top:13.39px;bottom:0;background:#fdefd5"></div></div><div class="mmt" style="left:57.11px;top:8.91px;width:16.60px;height:9.76px"><div style="position:absolute;left:0;right:0;top:0;height:3.2px;background:linear-gradient(#bcd2f2,#fff)"></div></div><div class="mmt" style="left:57.11px;top:30.18px;width:16.60px;height:31.99px"><div style="position:absolute;left:0;right:0;top:0;height:3.2px;background:linear-gradient(#bcd2f2,#fff)"></div><div style="position:absolute;left:0;right:0;top:22.92px;bottom:0;background:#fdefd5"></div></div><div class="mmt" style="left:91.68px;top:16.02px;width:16.60px;height:39.03px"><div style="position:absolute;left:0;right:0;top:0;height:3.2px;background:linear-gradient(#bcd2f2,#fff)"></div><div style="position:absolute;left:0;right:0;top:22.69px;bottom:0;background:#fdefd5"></div></div><div class="mmt" style="left:91.68px;top:67.35px;width:16.60px;height:7.72px"><div style="position:absolute;left:0;right:0;top:0;height:3.2px;background:linear-gradient(#bcd2f2,#fff)"></div></div><div class="mmt" style="left:126.12px;top:23.02px;width:16.60px;height:86.68px"><div style="position:absolute;left:0;right:0;top:0;height:1.6px;background:#0c47a0"></div><div style="position:absolute;left:0;right:0;top:45.38px;bottom:0;background:#fdefd5"></div><div style="position:absolute;left:0;right:0;top:49.92px;height:2.2px;background:#3a7ddf"></div></div><div class="mmt" style="left:160.56px;top:16.02px;width:16.60px;height:29.73px"><div style="position:absolute;left:0;right:0;top:0;height:3.2px;background:linear-gradient(#bcd2f2,#fff)"></div><div style="position:absolute;left:0;right:0;top:24.96px;bottom:0;background:#fdefd5"></div></div><div class="mmt" style="left:160.56px;top:58.02px;width:16.60px;height:50.60px"><div style="position:absolute;left:0;right:0;top:0;height:3.2px;background:linear-gradient(#bcd2f2,#fff)"></div><div style="position:absolute;left:0;right:0;top:43.34px;bottom:0;background:#fdefd5"></div></div><div class="mmt" style="left:160.56px;top:120.94px;width:16.60px;height:15.88px"><div style="position:absolute;left:0;right:0;top:0;height:3.2px;background:linear-gradient(#bcd2f2,#fff)"></div></div><div id="mm-view"></div></div></div>
<div id="zoomctl">
<div class="zc-pct">60%</div>
<div class="zc-div" style="top:34px"></div>
<svg style="position:absolute;left:15px;top:52px" width="11" height="11"><path d="M5.5 0.5 V10.5 M0.5 5.5 H10.5" stroke="#8a9097" stroke-width="1.5"/></svg>
<svg style="position:absolute;left:15px;top:87px" width="11" height="11"><path d="M0.5 5.5 H10.5" stroke="#8a9097" stroke-width="1.8"/></svg>
<div class="zc-div" style="top:112.8px"></div>
<svg style="position:absolute;left:13px;top:128.5px" width="14" height="14" viewBox="0 0 14 14"><g fill="none" stroke="#8a9097" stroke-width="1.5"><path d="M0.7 4 V1.7 Q0.7 0.7 1.7 0.7 H4 M10 0.7 H12.3 Q13.3 0.7 13.3 1.7 V4 M13.3 10 V12.3 Q13.3 13.3 12.3 13.3 H10 M4 13.3 H1.7 Q0.7 13.3 0.7 12.3 V10"/><circle cx="7" cy="7" r="2.1"/></g></svg>
<div class="zc-div" style="top:156.2px"></div>
<div style="position:absolute;left:8px;top:167px;width:24px;height:24px;border-radius:12px;background:#e1ebfa"></div>
<svg style="position:absolute;left:33.7px;top:739.5px;position:fixed" width="14.5" height="14.5" viewBox="3 3 18 18"><path d="M20.5 3l-.16.03L15 5.1 9 3 3.36 4.9c-.21.07-.36.25-.36.48V20.5c0 .28.22.5.5.5l.16-.03L9 18.9l6 2.1 5.64-1.9c.21-.07.36-.25.36-.48V3.5c0-.28-.22-.5-.5-.5zM15 19l-6-2.11V5l6 2.11V19z" fill="#3b7ddd"/></svg>
</div>
<div id="panel">
<div class="p-title">median_sale_price</div>
<div class="pill" style="left:16px;width:56px">median</div>
<div class="pill" style="left:80px;width:62px">measure</div>
<div class="tab" style="left:16px;width:259px;color:#3a82e4">Details</div>
<div class="tab" style="left:275px;width:258px;color:#2f353b">Code</div>
<div style="position:absolute;left:16px;top:150px;width:259px;height:2.3px;background:#3a82e4"></div>
<div style="position:absolute;left:275px;top:152px;width:258px;height:1px;background:#e1e4e8"></div>
<div class="lbl" style="top:169.8px">View Name</div>
<div class="mono" style="top:170px">order_items</div>
<div class="sep" style="top:202px"></div>
<div class="lbl" style="top:219.5px">Label</div>
<div class="jp" style="top:219px">オーダー 中央価格値</div>
<div class="sep" style="top:251px"></div>
<div class="lbl" style="top:268.5px">Distribution</div>
<div class="btn" style="top:264.3px"><i style="position:absolute;left:12px;top:9.2px"><svg width="18" height="14" viewBox="0 0 18 14"><g fill="none" stroke="#c8d9f2" stroke-width="1.5" stroke-linecap="round"><path d="M11.8 2.9 Q4.4 2.6 3.6 7.9"/><path d="M6.3 12.6 Q13.6 13.2 14.5 7.0"/></g><path d="M0.9 7.8 L6.3 7.8 L3.6 10.7 Z M11.8 7.3 L17.2 7.3 L14.5 4.4 Z" fill="#c8d9f2"/></svg></i><span>Calculate</span></div>
<div class="desc" style="top:318px">Distributions can only be shown for numeric dimensions on<br>a view with a count measure.</div>
<div class="sep" style="top:362.5px"></div>
<div class="lbl" style="top:379.5px">Values</div>
<div class="btn" style="top:375.3px"><i style="position:absolute;left:12px;top:9.2px"><svg width="18" height="14" viewBox="0 0 18 14"><g fill="none" stroke="#c8d9f2" stroke-width="1.5" stroke-linecap="round"><path d="M11.8 2.9 Q4.4 2.6 3.6 7.9"/><path d="M6.3 12.6 Q13.6 13.2 14.5 7.0"/></g><path d="M0.9 7.8 L6.3 7.8 L3.6 10.7 Z M11.8 7.3 L17.2 7.3 L14.5 4.4 Z" fill="#c8d9f2"/></svg></i><span>Calculate</span></div>
<div class="desc" style="top:429px;transform:scaleX(0.983);transform-origin:0 0">Values can only be shown for dimensions on a view with a<br>count measure.</div>
<div class="sep" style="top:473px"></div>
<div id="footer">
<svg style="position:absolute;left:21px;top:23px" width="12" height="14" viewBox="0 0 12 14"><g fill="none" stroke="#2e7be6" stroke-width="1.3"><circle cx="3" cy="3" r="1.8"/><path d="M4.3 4.3 L8 8"/><circle cx="6" cy="10.5" r="3.2"/></g></svg>
<div class="flink" style="left:43.5px;font-size:14.1px">Go to LookML</div>
<svg style="position:absolute;left:396px;top:24px" width="16" height="12" viewBox="0 0 16 12"><g fill="none" stroke="#2e7be6" stroke-width="1.2"><rect x="0.6" y="4" width="14.8" height="7.4" rx="1"/><rect x="3" y="0.6" width="5" height="3.4" rx="1"/><path d="M11 2 V4 M13 2 V4"/></g></svg>
<div class="flink" style="left:422px;font-size:14.9px">Explore with Field</div>
</div>
</div>
</body></html>
